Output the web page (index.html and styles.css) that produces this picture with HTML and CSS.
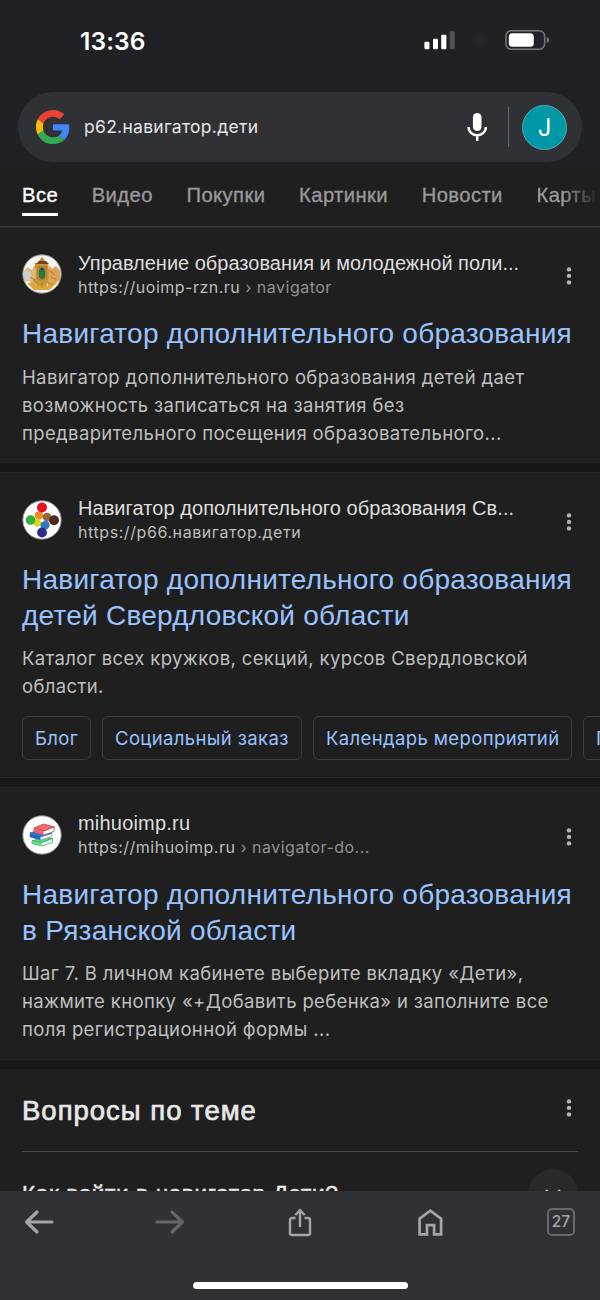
FILE: index.html
```html
<!DOCTYPE html>
<html lang="ru">
<head>
<meta charset="utf-8">
<title>p62.навигатор.дети</title>
<link rel="stylesheet" href="styles.css">
</head>
<body>
<div class="phone">
  <header class="top">
    <div class="status">
      <span class="clock">13:36</span>
      <svg class="status-icons" width="128" height="24" viewBox="0 0 128 24">
        <g fill="#fff"><rect x="0.4" y="13.8" width="5" height="7.500" rx="1.4"/><rect x="9" y="10.8" width="5" height="10.500" rx="1.4"/><rect x="17.2" y="6.8" width="5.2" height="14.500" rx="1.4"/></g>
        <rect x="25.6" y="3" width="5.2" height="18.300" rx="1.4" fill="#505153"/>
        <circle cx="56" cy="12" r="7" fill="#292a2d" class="haze"/>
        <rect x="82" y="2.7" width="38.6" height="18.6" rx="5.6" fill="none" stroke="#77787b" stroke-width="1.5"/>
        <rect x="84.8" y="5.3" width="25" height="13.5" rx="3.6" fill="#fff"/>
        <path d="M122.7 9v6c2-.8 2.6-1.8 2.6-3s-.6-2.200-2.600-3z" fill="#77787b"/>
      </svg>
    </div>
    <div class="search">
      <svg class="google" width="34" height="34" viewBox="0 0 48 48">
        <path fill="#EA4335" d="M24 9.500c3.540 0 6.710 1.220 9.210 3.600l6.850-6.850C35.900 2.380 30.470 0 24 0 14.620 0 6.510 5.380 2.560 13.220l7.980 6.190C12.430 13.720 17.740 9.500 24 9.500z"/>
        <path fill="#4285F4" d="M46.980 24.550c0-1.570-.15-3.090-.38-4.550H24v9.020h12.940c-.58 2.960-2.260 5.480-4.780 7.180l7.730 6c4.510-4.180 7.090-10.360 7.090-17.650z"/>
        <path fill="#FBBC05" d="M10.530 28.590c-.48-1.450-.76-2.990-.76-4.590s.27-3.140.76-4.590l-7.980-6.190C.92 16.460 0 20.120 0 24c0 3.880.92 7.540 2.560 10.780l7.970-6.190z"/>
        <path fill="#34A853" d="M24 48c6.480 0 11.930-2.130 15.890-5.810l-7.730-6c-2.150 1.450-4.920 2.300-8.160 2.300-6.260 0-11.570-4.220-13.470-9.910l-7.980 6.190C6.510 42.620 14.620 48 24 48z"/>
      </svg>
      <span class="query">р62.навигатор.дети</span>
      <svg class="mic" width="20" height="30" viewBox="0 0 20 30">
        <rect x="5.900" y="1" width="8.600" height="18" rx="4.300" fill="#fff"/>
        <path d="M1.500 15a8.700 8.300 0 0 0 17.400 0M10.200 23v6" fill="none" stroke="#fff" stroke-width="2.500"/>
      </svg>
      <span class="divider"></span>
      <span class="avatar">J</span>
    </div>
  </header>
  <nav class="tabs">
    <span class="tab tab-active">Все</span><span class="tab">Видео</span><span class="tab">Покупки</span><span class="tab">Картинки</span><span class="tab">Новости</span><span class="tab">Карты</span>
  </nav>
  <main class="results">
    <article class="result">
      <div class="head">
        <svg class="favicon" width="40" height="40" viewBox="0 0 40 40">
          <circle cx="20" cy="20" r="19.200" fill="#f7f5f0" stroke="#8d8d8d"/>
          <path d="M13 9h13l2 16-5 9h-7l-5-9z" fill="#c8963a"/>
          <path d="M2 17l4-4 4 3 2-5 2 5-1 15-6-4-5 1z" fill="#d9ba85"/>
          <path d="M38 17l-4-5-4 3-3-4-1 20 8-2 4-3z" fill="#dca45a"/>
          <path d="M2 18l4-2 3 4-1 6-5 1z" fill="#c9d0cb"/>
          <path d="M5 29l7-1 3 4h10l4-4 6 1-8 7H12z" fill="#e0a637"/>
          <path d="M20 3l4 5-2 2h-4l-2-2z" fill="#c08a2c"/>
          <path d="M14 10l3-3h7l3 3z" fill="#70422a"/>
          <path d="M15 12h10v12q-5 5-10 0z" fill="#b98121"/>
          <path d="M17 16q3-5 6 0v7q-3 4-6 0z" fill="#247a48"/>
          <circle cx="20" cy="15" r="1.300" fill="#203e2e"/>
          <path d="M11 26l4 3M28 17l5 4M29 23l5 2M26 29l5 2M8 23l5 3M20 28v6" stroke="#b57a2b"/>
        </svg>
        <div class="source"><div class="site s1">Управление образования и молодежной поли...</div><div class="url">https://uoimp-rzn.ru <span class="crumb">› navigator</span></div></div>
        <svg class="dots" width="6" height="20" viewBox="0 0 6 20"><g fill="#b4b4b4"><circle cx="3" cy="3.400" r="2.200"/><circle cx="3" cy="9.900" r="2.200"/><circle cx="3" cy="16.400" r="2.200"/></g></svg>
      </div>
      <h3 class="title">Навигатор дополнительного образования</h3>
      <p class="desc">Навигатор дополнительного образования детей дает<br>возможность записаться на занятия без<br>предварительного посещения образовательного...</p>
    </article>
    <article class="result result-links">
      <div class="head">
        <svg class="favicon" width="40" height="40" viewBox="0 0 40 40">
          <circle cx="20" cy="20" r="19.200" fill="#fff" stroke="#8d8d8d"/>
          <circle cx="17" cy="15.500" r="4.300" fill="#f08a24"/><circle cx="15.500" cy="22.500" r="4.300" fill="#dfd51f"/><circle cx="25" cy="17" r="4.300" fill="#93653e"/><circle cx="23" cy="25" r="4.500" fill="#2d79c7"/>
          <circle cx="20" cy="7.500" r="5" fill="#e8101c"/><circle cx="8.500" cy="20" r="4.800" fill="#35ae3c"/><circle cx="32" cy="20.300" r="5" fill="#4d2a1b"/><circle cx="20" cy="32.500" r="4.900" fill="#2b2c8c"/><circle cx="20" cy="20.500" r="1.800" fill="#fff"/>
        </svg>
        <div class="source"><div class="site s2">Навигатор дополнительного образования Св...</div><div class="url u2">https://р66.навигатор.дети</div></div>
        <svg class="dots" width="6" height="20" viewBox="0 0 6 20"><g fill="#b4b4b4"><circle cx="3" cy="3.400" r="2.200"/><circle cx="3" cy="9.900" r="2.200"/><circle cx="3" cy="16.400" r="2.200"/></g></svg>
      </div>
      <h3 class="title">Навигатор дополнительного образования<br>детей Свердловской области</h3>
      <p class="desc">Каталог всех кружков, секций, курсов Свердловской<br>области.</p>
      <div class="chips"><span class="chip chip-a">Блог</span><span class="chip chip-b">Социальный заказ</span><span class="chip chip-c">Календарь мероприятий</span><span class="chip chip-d">П</span></div>
    </article>
    <article class="result">
      <div class="head">
        <svg class="favicon" width="40" height="40" viewBox="0 0 40 40">
          <circle cx="20" cy="20" r="19.200" fill="#fff" stroke="#8d8d8d"/>
          <g stroke-width=".7" stroke-linejoin="round">
            <path d="M10 26l11-4 10 1.500-11 4z" fill="#5edb83" stroke="#2c8a51"/><path d="M10 26v2.500l10 2.500 10.500-3.500V23.500L20 27.500z" fill="#eafff0" stroke="#3a9a5e"/><path d="M10 26v2.500l9.500 2.500v-3.500z" fill="#5edb83"/>
            <path d="M8 18l11-3.500 11 4-11 3.500z" fill="#2877cf" stroke="#155aab"/><path d="M8 18v4l11 3 11-3.500v-3L19 22z" fill="#fff" stroke="#6d8fc0"/><path d="M8 18v4l10.500 3v-3.500z" fill="#1768bd"/>
            <path d="M12 13l9.500-4 11 3L22 16z" fill="#ff686d" stroke="#9d3540"/><path d="M12 13v4l10 3 10-3.500V12L22 16z" fill="#fff" stroke="#9d3540"/><path d="M12 13v4l9.500 3v-4z" fill="#f45f68"/>
          </g>
        </svg>
        <div class="source"><div class="site s3">mihuoimp.ru</div><div class="url u3">https://mihuoimp.ru <span class="crumb">› navigator-do...</span></div></div>
        <svg class="dots" width="6" height="20" viewBox="0 0 6 20"><g fill="#b4b4b4"><circle cx="3" cy="3.400" r="2.200"/><circle cx="3" cy="9.900" r="2.200"/><circle cx="3" cy="16.400" r="2.200"/></g></svg>
      </div>
      <h3 class="title">Навигатор дополнительного образования<br>в Рязанской области</h3>
      <p class="desc">Шаг 7. В личном кабинете выберите вкладку «Дети»,<br>нажмите кнопку «+Добавить ребенка» и заполните все<br>поля регистрационной формы ...</p>
    </article>
    <section class="questions">
      <div class="questions-head"><h2 class="questions-title">Вопросы по теме</h2>
        <svg class="dots-q" width="6" height="20" viewBox="0 0 6 20"><g fill="#b4b4b4"><circle cx="3" cy="3.400" r="2.200"/><circle cx="3" cy="9.900" r="2.200"/><circle cx="3" cy="16.400" r="2.200"/></g></svg>
      </div>
      <div class="question"><span class="question-text">Как войти в навигатор Дети?</span><span class="expand"><svg width="18" height="12" viewBox="0 0 18 12"><path d="M2 2l7 7 7-7" fill="none" stroke="#bdbdbd" stroke-width="2.400"/></svg></span></div>
    </section>
  </main>
  <footer class="toolbar">
    <div class="tools">
      <svg width="30" height="30" viewBox="0 0 30 30"><path d="M13 5L2.500 15 13 25M3 15h25" fill="none" stroke="#a4a5a8" stroke-width="3.200" stroke-linecap="round" stroke-linejoin="round"/></svg>
      <svg width="30" height="30" viewBox="0 0 30 30"><path d="M17 5l10.500 10L17 25M27 15H2" fill="none" stroke="#66676a" stroke-width="3.200" stroke-linecap="round" stroke-linejoin="round"/></svg>
      <svg width="30" height="30" viewBox="0 0 30 30"><path d="M9.500 11H6a2 2 0 0 0-2 2v13a2 2 0 0 0 2 2h16a2 2 0 0 0 2-2V13a2 2 0 0 0-2-2h-3.500M14 20V3.500M9.300 8L14 3.300 18.700 8" fill="none" stroke="#a4a5a8" stroke-width="2.400"/></svg>
      <svg width="30" height="30" viewBox="0 0 30 30"><path d="M3.600 27.400V11.700l10.700-8 10.800 8v15.700h-7v-9.300H11v9.300z" fill="none" stroke="#a4a5a8" stroke-width="2.700"/></svg>
      <span class="tab-count">27</span>
    </div>
    <div class="home-bar"></div>
  </footer>
</div>
</body>
</html>
```
FILE: styles.css
```css
* { box-sizing: border-box; }
body { margin: 0; background: #1f1f1f; font-family: Inter, "Noto Sans", sans-serif; color: #dedede; }
.phone { width: 600px; height: 1300px; overflow: hidden; display: flex; flex-direction: column; background: #1f1f1f; white-space: nowrap; }
.top { flex: none; height: 171px; background: linear-gradient(#202124 96%, #1f1f1f); }
.status { height: 92px; padding: 28px 48px 0 80px; display: flex; justify-content: space-between; align-items: flex-start; }
.clock { font-size: 24.5px; line-height: 26px; font-weight: 600; color: #fff; letter-spacing: .1px; }
.haze { filter: blur(3px); }
.search { height: 70px; margin: 0 18px; padding: 0 15px 0 18px; border-radius: 35px; background: #303134; display: flex; align-items: center; }
.query { flex: 1; margin-left: 14px; font-size: 17.5px; line-height: 24px; letter-spacing: .28px; color: #e5e5e6; }
.divider { width: 1px; height: 40px; margin: 0 13px 0 21px; background: #68696c; }
.avatar { width: 45px; height: 45px; border-radius: 50%; border: 1px solid #52aab2; background: #0097a7; color: #fff; font-size: 24px; line-height: 43px; text-align: center; }
.tabs { flex: none; height: 56px; padding: 9px 0 0 22px; display: flex; gap: 33.7px; border-bottom: 1px solid #383838; background: #1f1f1f; font-family: "Liberation Sans", Arial, sans-serif; }
.tab { height: 36px; font-size: 20.2px; line-height: 31px; letter-spacing: .42px; color: #999; -webkit-text-stroke: .35px; }
.tab:last-child { -webkit-mask-image: linear-gradient(90deg, #000 45%, transparent 104%); mask-image: linear-gradient(90deg, #000 45%, transparent 104%); }
.tab-active { color: #fff; border-bottom: 3px solid #fff; border-radius: 1px; }
.results { flex: 1; min-height: 0; overflow: hidden; }
.result { height: 245px; padding: 27px 22px 0; border-bottom: 9px solid #171717; box-shadow: inset 0 -1px #262626, inset 0 1px #262626; }
.result-links { height: 315px; }
.result:nth-child(3) { height: 282px; }
.head { height: 41px; display: flex; align-items: center; }
.favicon { margin-bottom: 1px; }
.result:nth-child(n+2) .favicon { margin-bottom: 0; margin-top: 1px; }
.result:nth-child(n+2) .dots { margin-top: 5px; }
.result:nth-child(n+2) .title { margin-top: 22px; }
.result:nth-child(n+2) .desc { margin-top: 10px; }
.result:nth-child(n+2) .chips { margin-top: 16px; }
.source { flex: 1; margin-left: 16px; }
.site { font-family: "Liberation Sans", Arial, sans-serif; font-size: 20px; line-height: 25px; color: #dedede; }
.s2 { letter-spacing: .06px; }
.s3 { letter-spacing: .2px; }
.url { font-size: 16px; line-height: 23px; color: #bdbdbd; letter-spacing: .49px; }
.u2 { letter-spacing: .58px; }
.crumb { color: #929292; }
.dots { margin: 3px 6px 0 0; }
.title { margin: 21px 0 0; font-family: "Liberation Sans", Arial, sans-serif; font-size: 28px; line-height: 36px; letter-spacing: .25px; font-weight: 400; color: #99c3ff; }
.desc { margin: 11px 0 0; font-size: 18.5px; line-height: 28px; letter-spacing: .37px; color: #bfbfbf; }
.chips { display: flex; gap: 11px; }
.chip { flex: none; height: 44px; border: 1px solid #3c3d40; border-radius: 6px; font-size: 18.5px; line-height: 43px; letter-spacing: .37px; color: #99c3ff; padding-left: 12px; }
.chip-a { width: 69px; }
.chip-b { width: 200px; }
.chip-c { width: 259px; }
.chip-d { width: 130px; }
.questions { padding: 0 22px; }
.questions-head { height: 83px; display: flex; justify-content: space-between; align-items: center; border-bottom: 1px solid #4a4a4a; }
.questions-title { margin: 2px 0 0; font-family: "Liberation Sans", Arial, sans-serif; font-size: 27.5px; line-height: 36px; letter-spacing: 1px; font-weight: 400; color: #e8e8e8; -webkit-text-stroke: .7px #e8e8e8; }
.dots-q { margin: 0 6px 5px 0; }
.question { height: 82px; display: flex; justify-content: space-between; align-items: center; }
.question-text { padding-top: 1px; font-family: "Liberation Sans", Arial, sans-serif; font-size: 22.5px; letter-spacing: .65px; color: #e8e8e8; -webkit-text-stroke: .5px #e8e8e8; }
.expand { width: 50px; height: 50px; margin-top: 2px; border-radius: 50%; background: #28292a; display: grid; place-items: center; }
.expand svg { margin-bottom: 1px; }
.toolbar { flex: none; height: 109px; background: #303134; }
.tools { height: 91px; padding: 16px 25px 0 24px; display: flex; justify-content: space-between; align-items: flex-start; }
.tab-count { width: 28px; height: 28px; margin-top: 1px; border: 2px solid #68696c; border-radius: 5px; font-size: 15.5px; line-height: 24px; font-weight: 500; color: #a4a5a8; text-align: center; }
.home-bar { width: 215px; height: 7px; margin: 0 auto; border-radius: 4px; background: #fff; }
```
